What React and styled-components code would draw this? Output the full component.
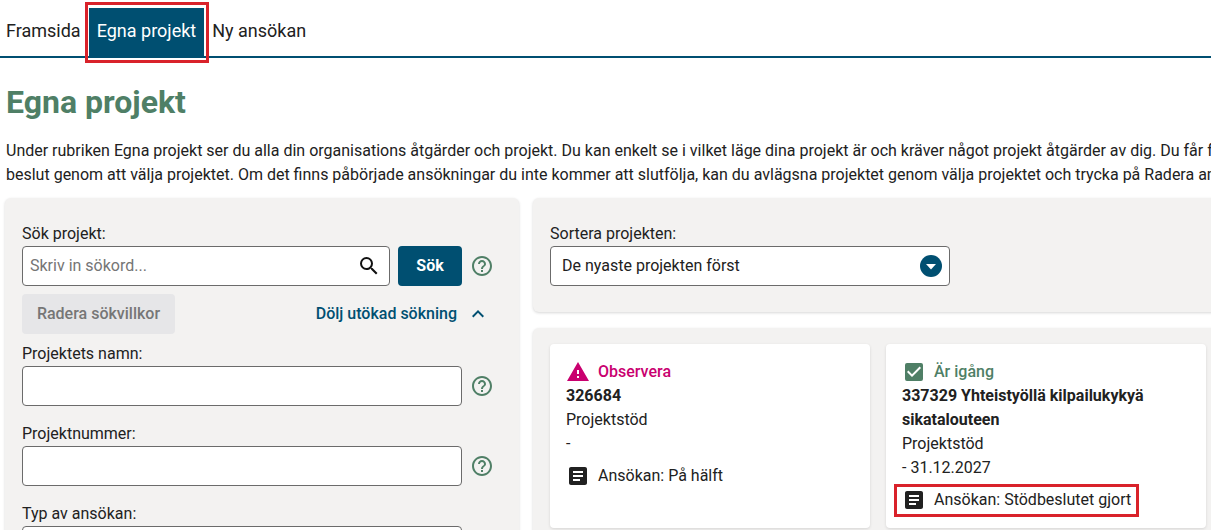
import React from "react";
import styled, { createGlobalStyle } from "styled-components";
import { MdSearch, MdHelpOutline, MdKeyboardArrowUp, MdArticle, MdWarning, MdCheckBox } from "react-icons/md";

const Global = createGlobalStyle`
  html, body {
    margin: 0;
    padding: 0;
    height: 530px;
    overflow: hidden;
    background: #fff;
    font-family: Roboto, "Liberation Sans", sans-serif;
    font-size: 16px;
    line-height: 24px;
    color: #212121;
  }
`;

const BLUE = "#004f71";
const GREEN = "#4f7f66";

const Page = styled.div`
  width: 1211px;
  height: 530px;
  overflow: hidden;
`;

const Nav = styled.nav`
  display: flex;
  align-items: stretch;
  height: 48px;
  padding: 8px 0 0 6px;
  border-bottom: 2px solid ${BLUE};
`;

const NavItem = styled.a`
  position: relative;
  display: flex;
  align-items: center;
  padding: 0 8px 2px;
  font-size: 18px;
  color: ${(p) => (p.$active ? "#fff" : "#212121")};
  background: ${(p) => (p.$active ? BLUE : "transparent")};
  &:first-child {
    padding-left: 0;
  }
  ${(p) =>
    p.$active &&
    `&::after {
      content: "";
      position: absolute;
      inset: -6px -5px -7px -4px;
      border: 3px solid #d9222a;
    }`}
`;

const Content = styled.main`
  padding: 0 0 0 5px;
`;

const Title = styled.h1`
  margin: 24px 0 17px 1px;
  font-size: 32px;
  line-height: 40px;
  font-weight: 700;
  color: ${GREEN};
`;

const Intro = styled.p`
  margin: 0 0 11px 1px;
  white-space: nowrap;
  overflow: hidden;
`;

const Columns = styled.div`
  display: grid;
  grid-template-columns: 514px 700px;
  gap: 14px;
`;

const Panel = styled.section`
  background: #f3f2f1;
  border-radius: 6px;
  box-shadow: 0 1px 3px rgba(0, 0, 0, 0.16);
`;

const Stack = styled.div`
  display: flex;
  flex-direction: column;
  gap: 16px;
`;

const SearchPanel = styled(Panel)`
  padding: 24px 17px 16px;
`;

const Label = styled.label`
  display: block;
  height: 24px;
  line-height: 24px;
`;

const Row = styled.div`
  display: flex;
  align-items: center;
  gap: 8px;
  margin-bottom: ${(p) => p.$mb || 0}px;
`;

const InputBox = styled.div`
  box-sizing: border-box;
  display: flex;
  align-items: center;
  justify-content: space-between;
  flex: none;
  width: ${(p) => p.$width}px;
  height: 40px;
  padding: 0 ${(p) => p.$pr ?? 8}px 0 ${(p) => p.$pl ?? 7}px;
  background: #fff;
  border: 1px solid #6b6b6b;
  border-radius: 4px;
`;

const Placeholder = styled.span`
  color: #757575;
`;

const SearchButton = styled.button`
  width: 64px;
  height: 40px;
  padding: 0;
  border: 0;
  border-radius: 4px;
  background: ${BLUE};
  color: #fff;
  font: 700 16px/24px Roboto, sans-serif;
`;

const Help = styled(MdHelpOutline)`
  flex: none;
  font-size: 24px;
  color: ${GREEN};
`;

const Actions = styled.div`
  display: flex;
  align-items: center;
  justify-content: space-between;
  width: 468px;
  margin: 8px 0;
`;

const ClearButton = styled.button`
  width: 153px;
  height: 40px;
  padding: 0;
  border: 0;
  border-radius: 4px;
  background: #e6e6e8;
  color: #767676;
  font: 500 16px/24px Roboto, sans-serif;
`;

const Toggle = styled.span`
  display: flex;
  align-items: center;
  gap: 9px;
  font-weight: 500;
  color: ${BLUE};
  svg {
    font-size: 24px;
  }
`;

const SortPanel = styled(Panel)`
  box-sizing: border-box;
  height: 114px;
  padding: 24px 17px;
`;

const ListPanel = styled(Panel)`
  display: flex;
  gap: 16px;
  height: 300px;
  padding: 16px 17px;
`;

const Card = styled.article`
  box-sizing: border-box;
  width: 320px;
  height: 184px;
  padding: 16px;
  background: #fff;
  border-radius: 4px;
  box-shadow: 0 1px 3px rgba(0, 0, 0, 0.12);
`;

const Status = styled.div`
  display: flex;
  align-items: center;
  gap: 8px;
  height: 24px;
  font-weight: 500;
  color: ${(p) => p.$color};
  svg {
    font-size: 24px;
    flex: none;
  }
`;

const CardTitle = styled.div`
  font-weight: 700;
`;

const AppRow = styled.div`
  position: relative;
  display: flex;
  align-items: center;
  gap: 8px;
  margin-top: 8px;
  svg {
    font-size: 24px;
    flex: none;
  }
  ${(p) =>
    p.$marked &&
    `&::after {
      content: "";
      position: absolute;
      inset: -4px 2px -5px -8px;
      width: 245px;
      box-sizing: border-box;
      border: 3px solid #d9222a;
    }`}
`;

const Caret = () => (
  <svg width="22" height="22" viewBox="0 0 22 22">
    <circle cx="11" cy="11" r="11" fill={BLUE} />
    <path d="M6 9h10l-5 5.5z" fill="#fff" />
  </svg>
);

const cards = [
  {
    status: "Observera",
    color: "#c9006f",
    icon: <MdWarning />,
    title: ["326684"],
    type: "Projektstöd",
    date: "-",
    app: "Ansökan: På hälft",
  },
  {
    status: "Är igång",
    color: GREEN,
    icon: <MdCheckBox />,
    title: ["337329 Yhteistyöllä kilpailukykyä", "sikatalouteen"],
    type: "Projektstöd",
    date: "- 31.12.2027",
    app: "Ansökan: Stödbeslutet gjort",
    marked: true,
  },
];

export default function App() {
  return (
    <Page>
      <Global />
      <Nav>
        <NavItem>Framsida</NavItem>
        <NavItem $active>Egna projekt</NavItem>
        <NavItem>Ny ansökan</NavItem>
      </Nav>
      <Content>
        <Title>Egna projekt</Title>
        <Intro>
          Under rubriken Egna projekt ser du alla din organisations åtgärder och projekt. Du kan enkelt se i vilket läge dina projekt är och kräver något projekt åtgärder av dig. Du får fram
          <br />
          beslut genom att välja projektet. Om det finns påbörjade ansökningar du inte kommer att slutfölja, kan du avlägsna projektet genom välja projektet och trycka på Radera ansökan
        </Intro>
        <Columns>
          <SearchPanel>
            <Label>Sök projekt:</Label>
            <Row $mb={8}>
              <InputBox $width={368}>
                <Placeholder>Skriv in sökord...</Placeholder>
                <MdSearch size={24} color="#111" />
              </InputBox>
              <SearchButton>Sök</SearchButton>
              <Help />
            </Row>
            <Actions>
              <ClearButton>Radera sökvillkor</ClearButton>
              <Toggle>
                Dölj utökad sökning
                <MdKeyboardArrowUp />
              </Toggle>
            </Actions>
            <Label>Projektets namn:</Label>
            <Row $mb={16}>
              <InputBox $width={440} />
              <Help />
            </Row>
            <Label>Projektnummer:</Label>
            <Row $mb={16}>
              <InputBox $width={440} />
              <Help />
            </Row>
            <Label>Typ av ansökan:</Label>
            <Row>
              <InputBox $width={440} />
            </Row>
          </SearchPanel>
          <Stack>
            <SortPanel>
              <Label>Sortera projekten:</Label>
              <InputBox $width={400} $pl={11} $pr={7}>
                De nyaste projekten först
                <Caret />
              </InputBox>
            </SortPanel>
            <ListPanel>
              {cards.map((c) => (
                <Card key={c.status}>
                  <Status $color={c.color}>
                    {c.icon}
                    {c.status}
                  </Status>
                  {c.title.map((t) => (
                    <CardTitle key={t}>{t}</CardTitle>
                  ))}
                  <div>{c.type}</div>
                  <div>{c.date}</div>
                  <AppRow $marked={c.marked}>
                    <MdArticle />
                    {c.app}
                  </AppRow>
                </Card>
              ))}
            </ListPanel>
          </Stack>
        </Columns>
      </Content>
    </Page>
  );
}
